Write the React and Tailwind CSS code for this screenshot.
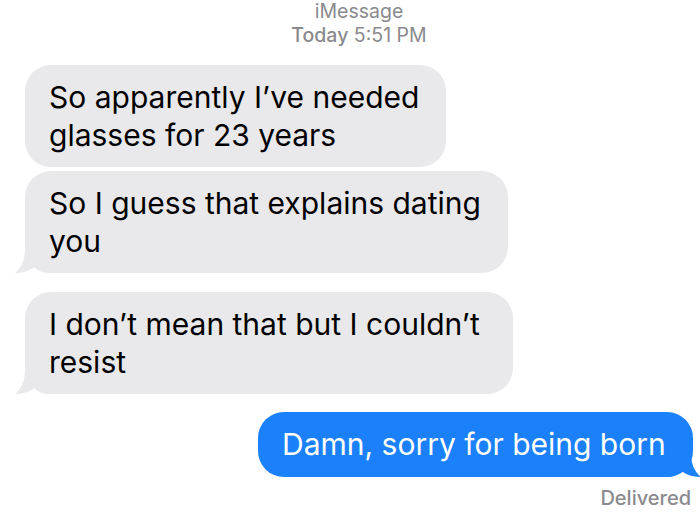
import React from 'react'

const font = { fontFamily: 'Inter, "Liberation Sans", sans-serif' }

// tail shapes for the bubbles, left = incoming (gray), right = outgoing (blue)
const TailLeft = ({ color }) => (
  <svg className="absolute -left-[10px] bottom-0" width="34" height="24" viewBox="0 0 34 24">
    <path d="M10 0 C10 12 6 19 0 24 C8 24 14 22 19 18.5 C23 22 28 24 34 24 L34 0 Z" fill={color} />
  </svg>
)

const TailRight = ({ color }) => (
  <svg className="absolute -right-[8px] bottom-0" width="34" height="24" viewBox="0 0 34 24">
    <path d="M24 0 C24 12 28 19 34 24 C26 24 20 22 15 18.5 C11 22 6 24 0 24 L0 0 Z" fill={color} />
  </svg>
)

const Incoming = ({ width, tail, children, className = '' }) => (
  <div className={`relative ml-[25px] ${width} ${className}`}>
    <div className="rounded-[26px] bg-[#e9e9eb] px-[24px] py-[13px] text-[30px] leading-[38px] text-black whitespace-nowrap">
      {children}
    </div>
    {tail ? <TailLeft color="#e9e9eb" /> : null}
  </div>
)

export default function App() {
  return (
    <div className="w-[700px] h-[518px] bg-white overflow-hidden flex flex-col" style={font}>
      {/* header */}
      <div className="pl-[18px] -mt-[1px] flex flex-col items-center text-[19.5px] leading-[24px] text-[#8a8a8e]">
        <div>iMessage</div>
        <div><span className="font-medium">Today</span> 5:51 PM</div>
      </div>

      <Incoming width="w-[421px]" className="mt-[18px]">
        So apparently I’ve needed<br />glasses for 23 years
      </Incoming>

      <Incoming width="w-[483px]" tail className="mt-[4px]">
        So I guess that explains dating<br />you
      </Incoming>

      <Incoming width="w-[488px]" tail className="mt-[19px]">
        I don’t mean that but I couldn’t<br />resist
      </Incoming>

      {/* outgoing */}
      <div className="relative self-end mr-[7px] mt-[18px] w-[435px]">
        <div className="rounded-[26px] bg-[#1a80fb] px-[24px] py-[13px] text-[30px] leading-[39px] text-white whitespace-nowrap">
          Damn, sorry for being born
        </div>
        <TailRight color="#1a80fb" />
      </div>

      <div className="self-end mr-[9px] mt-[9px] text-[20px] leading-[24px] font-medium text-[#8a8a8e]">
        Delivered
      </div>
    </div>
  )
}
